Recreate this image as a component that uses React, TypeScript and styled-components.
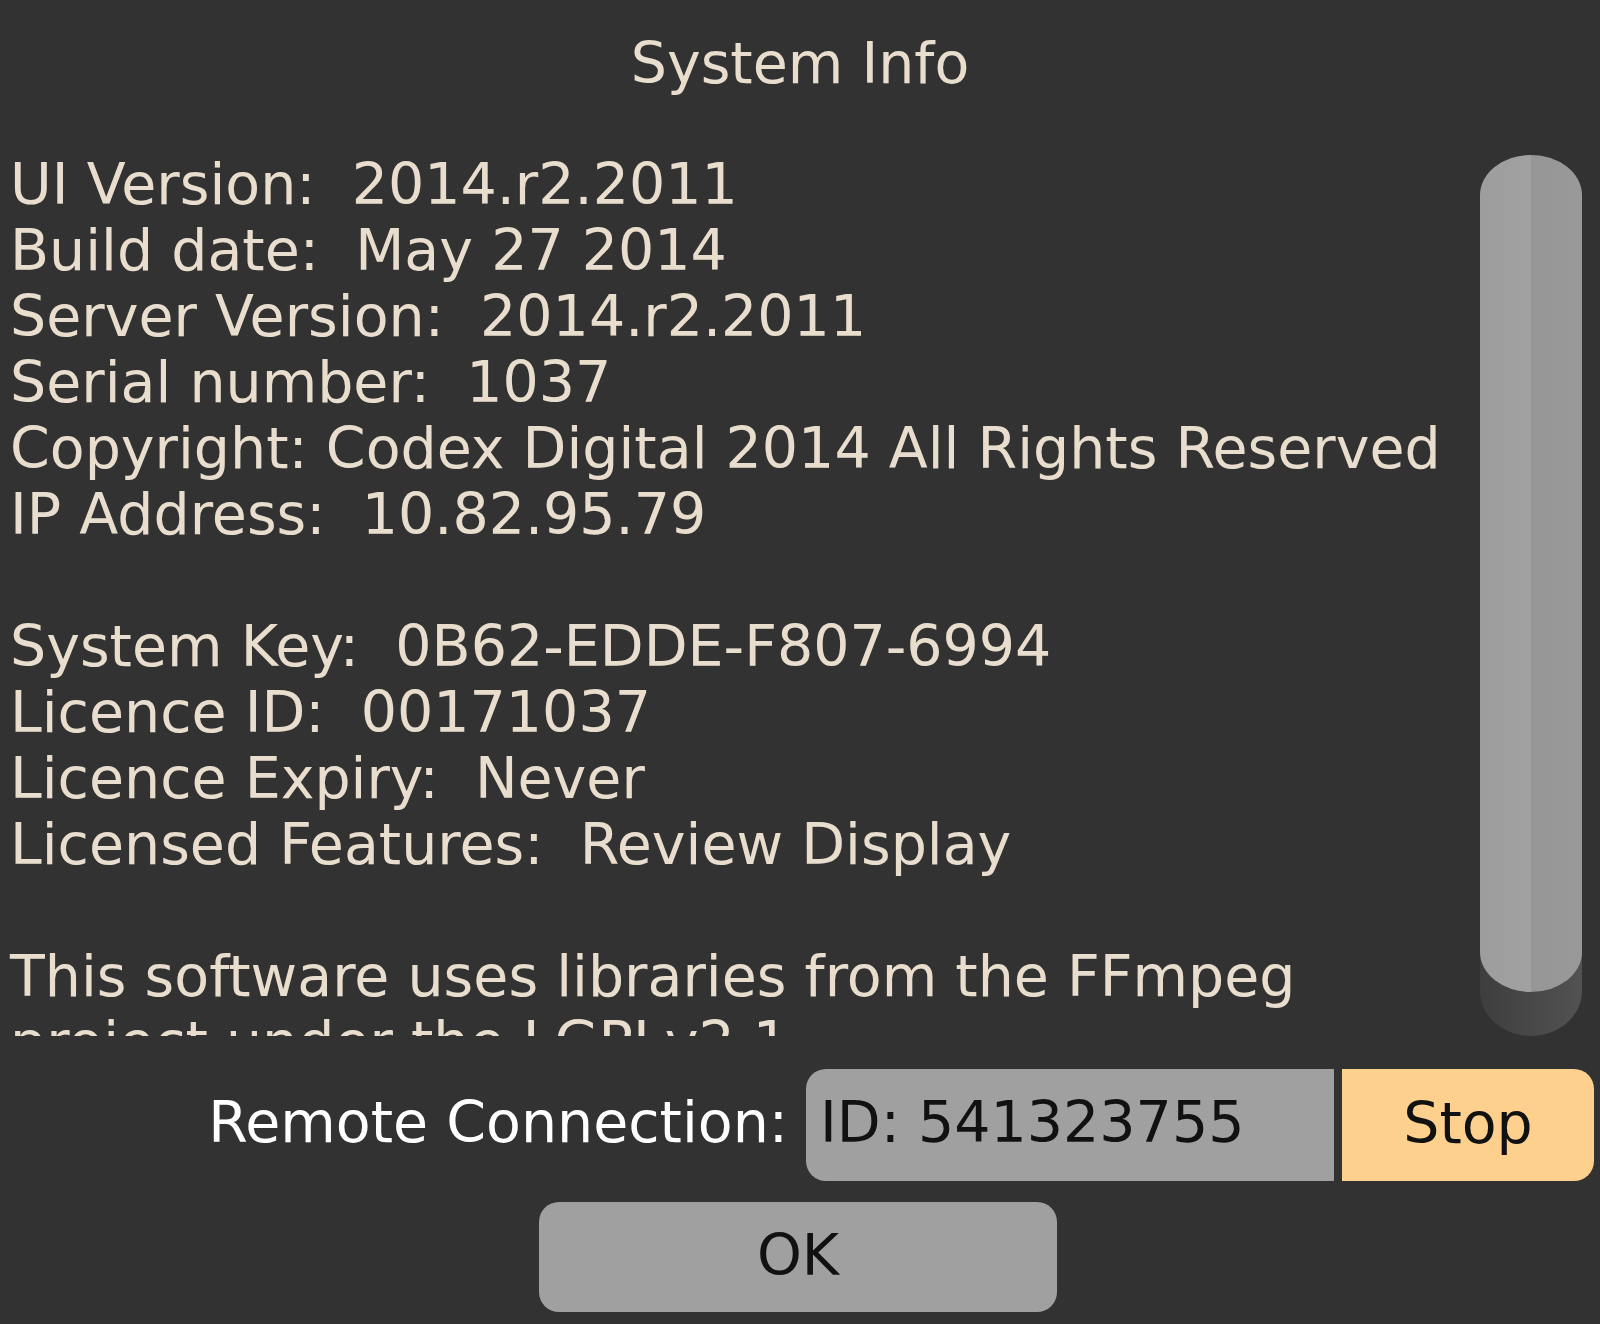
import { FC } from 'react';
import styled, { createGlobalStyle } from 'styled-components';

const GlobalStyle = createGlobalStyle`
  html, body {
    margin: 0;
    padding: 0;
    background: #323232;
  }
`;

const Dialog = styled.div`
  width: 1600px;
  height: 1324px;
  display: flex;
  flex-direction: column;
  font-family: 'DejaVu Sans', 'Liberation Sans', sans-serif;
  font-size: 57px;
  color: #e9dece;
  background: #323232;
  overflow: hidden;
`;

const Title = styled.div`
  height: 148px;
  padding-top: 30px;
  box-sizing: border-box;
  line-height: 66px;
  text-align: center;
`;

const ScrollArea = styled.div`
  height: 888px;
  display: flex;
  gap: 40px;
`;

const InfoText = styled.div`
  flex: 1;
  padding: 3px 0 0 10px;
  line-height: 66px;
  white-space: pre;
  overflow: hidden;
`;

const Track = styled.div`
  width: 102px;
  margin: 7px 18px 0 0;
  border-radius: 51px / 45px;
  background: linear-gradient(90deg, #3e3e3e 0%, #484848 50%, #525252 100%);
  display: flex;
  flex-direction: column;
`;

const Thumb = styled.div`
  height: 837px;
  border-radius: 51px / 40px;
  background: linear-gradient(90deg, #9d9d9d 0%, #a1a1a1 50%, #969696 50%, #999 100%);
`;

const ConnectionRow = styled.div`
  margin-top: 33px;
  height: 112px;
  display: flex;
  align-items: stretch;
  justify-content: flex-end;
  padding-right: 6px;
`;

const ConnectionLabel = styled.div`
  align-self: center;
  color: #ffffff;
  margin-right: 18px;
  padding-bottom: 6px;
`;

const IdField = styled.div`
  width: 528px;
  box-sizing: border-box;
  padding: 0 0 6px 14px;
  display: flex;
  align-items: center;
  background: #a0a0a0;
  color: #111;
  border-radius: 20px 0 0 20px;
`;

const StopButton = styled.div`
  width: 252px;
  margin-left: 8px;
  display: flex;
  align-items: center;
  justify-content: center;
  padding-bottom: 4px;
  background: #fdd18d;
  color: #111;
  border-radius: 0 20px 20px 0;
`;

const Footer = styled.div`
  margin-top: 21px;
  display: flex;
  justify-content: center;
`;

const OkButton = styled.div`
  width: 518px;
  height: 110px;
  margin-left: -4px;
  display: flex;
  align-items: center;
  justify-content: center;
  padding-bottom: 4px;
  box-sizing: border-box;
  background: #a0a0a0;
  color: #111;
  border-radius: 20px;
`;

const lines = [
  'UI Version:  2014.r2.2011',
  'Build date:  May 27 2014',
  'Server Version:  2014.r2.2011',
  'Serial number:  1037',
  'Copyright: Codex Digital 2014 All Rights Reserved',
  'IP Address:  10.82.95.79',
  ' ',
  'System Key:  0B62-EDDE-F807-6994',
  'Licence ID:  00171037',
  'Licence Expiry:  Never',
  'Licensed Features:  Review Display',
  ' ',
  'This software uses libraries from the FFmpeg',
  'project under the LGPLv2.1',
];

const App: FC = () => (
  <>
    <GlobalStyle />
    <Dialog>
      <Title>System Info</Title>
      <ScrollArea>
        <InfoText>
          {lines.map((line, i) => (
            <div key={i}>{line}</div>
          ))}
        </InfoText>
        <Track>
          <Thumb />
        </Track>
      </ScrollArea>
      <ConnectionRow>
        <ConnectionLabel>Remote Connection:</ConnectionLabel>
        <IdField>ID: 541323755</IdField>
        <StopButton>Stop</StopButton>
      </ConnectionRow>
      <Footer>
        <OkButton>OK</OkButton>
      </Footer>
    </Dialog>
  </>
);

export default App;
